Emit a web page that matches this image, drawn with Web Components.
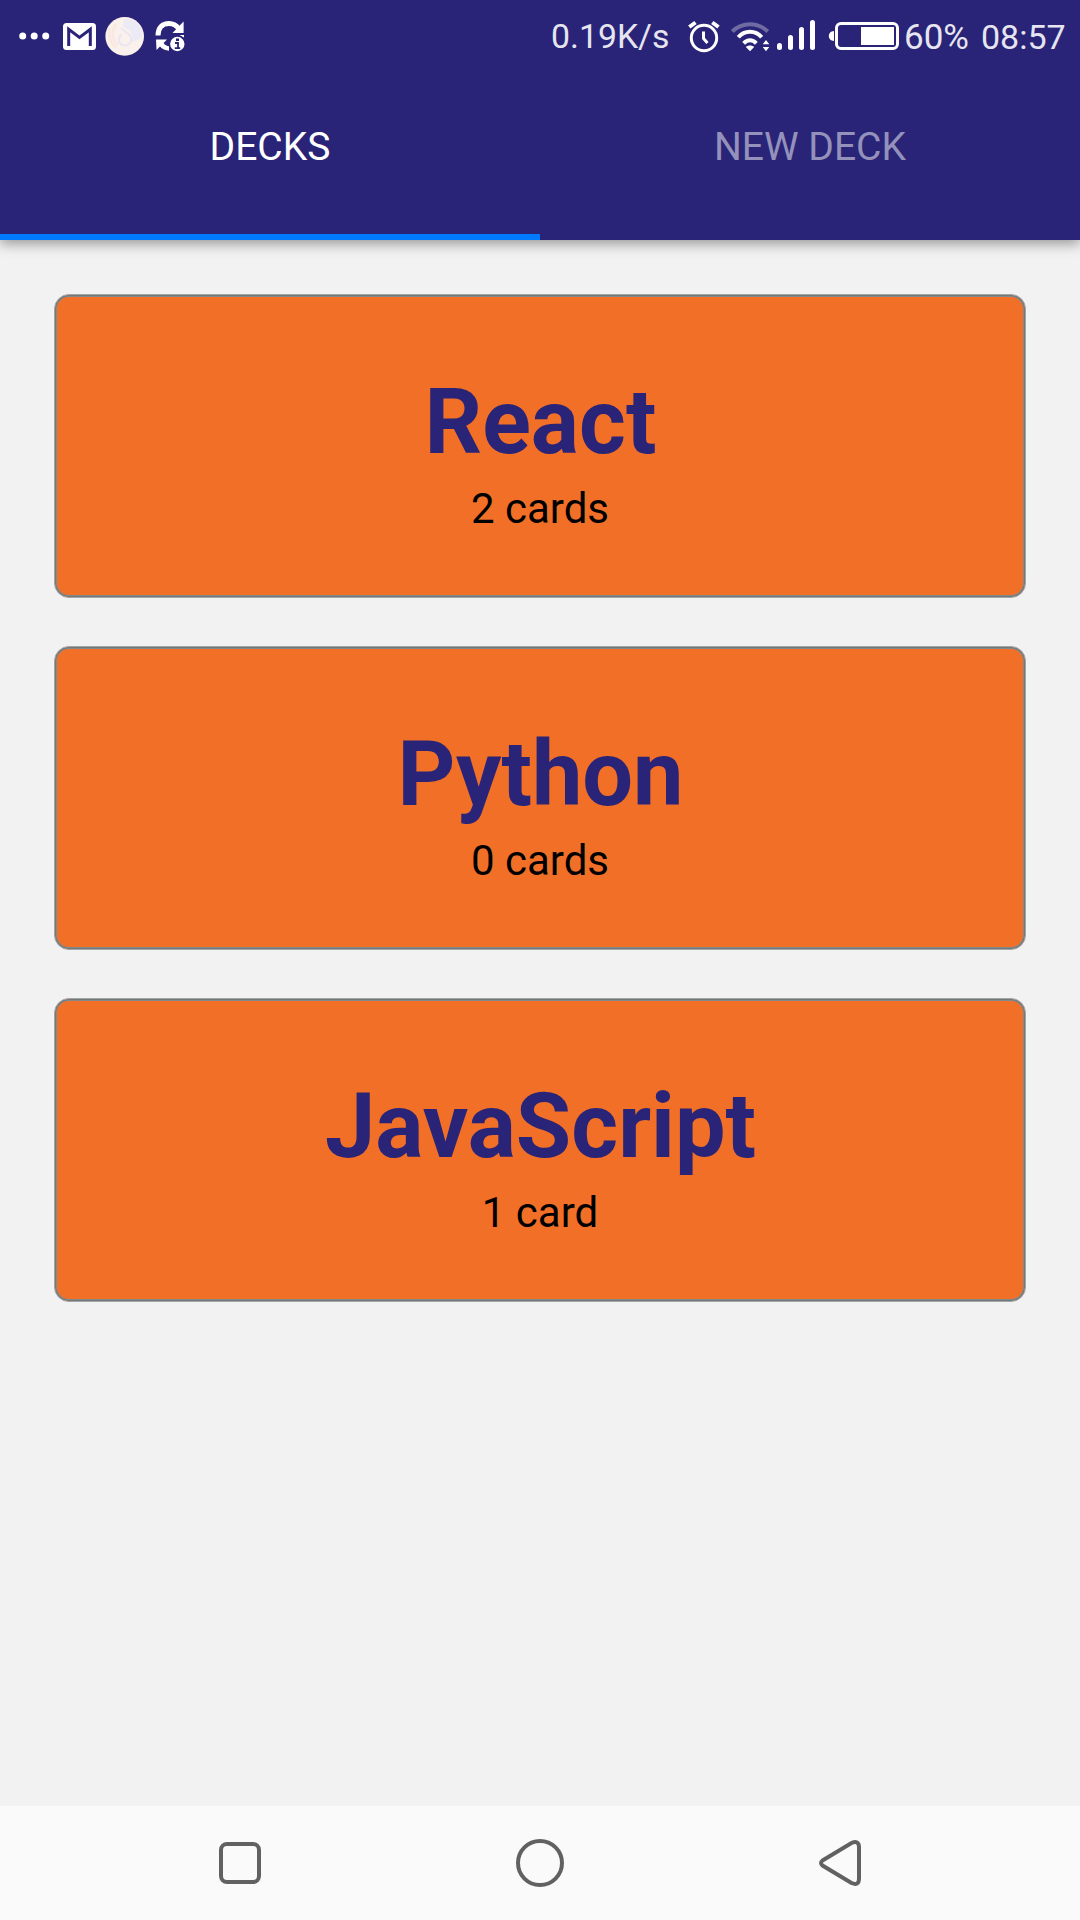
<!DOCTYPE html>
<html lang="en">
<head>
<meta charset="utf-8">
<title>Decks</title>
<style>
html,body{margin:0;padding:0}
body{width:1080px;height:1920px;overflow:hidden;background:#f2f2f2;font-family:Roboto,"Liberation Sans",sans-serif}
</style>
</head>
<body>
<decks-app></decks-app>
<script>
function define(name, html){
  const t=document.createElement('template');
  t.innerHTML=html;
  customElements.define(name,class extends HTMLElement{
    constructor(){super();this.attachShadow({mode:'open'}).appendChild(t.content.cloneNode(true));}
  });
}

define('status-bar',`
<style>
:host{display:flex;justify-content:space-between;height:72px;color:#e6e5f0;font-size:34px;line-height:72px;white-space:nowrap}
div{display:flex}
svg{display:block;flex:none}
span{display:block;flex:none;height:72px;padding-top:1px;box-sizing:border-box}
.net{width:135px;font-size:33.8px}.pct{width:78px;font-size:35px;padding-top:2px;padding-left:1px}.clock{width:99px}
</style>
<div>
<svg width="200" height="72" viewBox="0 0 200 72" fill="#fff">
  <circle cx="22.7" cy="36" r="3.5"/><circle cx="34.2" cy="36" r="3.5"/><circle cx="45.7" cy="36" r="3.5"/>
  <rect x="63" y="23" width="33" height="27" rx="3.5"/>
  <path d="M68.7 46V29.2L79.5 37.4L90.3 29.2V46" fill="none" stroke="#292477" stroke-width="3"/>
  <circle cx="124.7" cy="36.4" r="19.3" fill="#fbf1ec"/>
  <path d="M124 19C136 18 143 27 142 37C139 40 135 41 131 42C135 35 130 29 123 27Z" fill="#ecebf5"/>
  <path d="M121 28C125 33 133 34 131 41C129 47 120 47 119 40C119 36 122 34 122 34" fill="none" stroke="#e9e6f2" stroke-width="2"/>
  <path d="M110 28c-2 7 0 15 6 20M116 24c-5 8-4 16 2 21" fill="none" stroke="#f9e8df" stroke-width="2.500"/>
  <path d="M158 35.500C158 27.500 162.500 23.500 169 23.500C173.500 23.500 176.500 25.500 179 28.700" fill="none" stroke="#fff" stroke-width="5"/>
  <path d="M183.600 21.500V33H172.500Z"/>
  <path d="M156 39.500H167L163.600 43C165 45.200 167 46 169 46.200V50.700C165.500 50.500 162.200 49 160 46.500L156.500 50Z"/>
  <path d="M179.500 35H184V37.500Z"/>
  <circle cx="177.300" cy="44" r="7.200"/>
  <rect x="176" y="38.500" width="3" height="2.500" fill="#292477"/>
  <path d="M175 43h3v5M174.800 48.200h5.400" stroke="#292477" stroke-width="1.800" fill="none"/>
</svg>
</div>
<div>
<span class="net">0.19K/s</span>
<svg width="217" height="72" viewBox="686 0 217 72" fill="none" stroke="#fff">
  <circle cx="704" cy="38" r="12.700" stroke-width="3"/>
  <path d="M703.500 31.500V38.500L707.500 43" stroke-width="3"/>
  <path d="M689.300 27L695.500 22.500M718.500 27L712.300 22.500" stroke-width="4"/>
  <path d="M732.300 31.500C742 21.800 758 21.800 767.700 31.500" stroke="#6f6ba2" stroke-width="4"/>
  <path d="M738.300 37.200C744.500 29.800 755.500 29.800 761.700 37.200M743.700 43.300C747.500 39.300 752.500 39.300 756.300 43.300" stroke-width="4"/>
  <g stroke="none" fill="#fff">
    <path d="M745.800 47C748 45 752 45 754.200 47L750 51.300Z"/>
    <path d="M762.700 44.300L766 40L769.300 44.300ZM762.700 47H769.300L766 51.300Z"/>
    <rect x="777" y="43" width="5" height="7" rx="2.500"/>
    <rect x="788" y="35" width="5" height="15" rx="2.500"/>
    <rect x="799" y="27" width="5" height="23" rx="2.500"/>
    <rect x="810" y="20" width="5" height="30" rx="2.500"/>
    <path d="M834 31V41C827 41 827 31 834 31Z"/>
    <rect x="861" y="27" width="33" height="18"/>
  </g>
  <rect x="836.500" y="23.500" width="61" height="25" rx="4.500" stroke-width="3"/>
</svg>
<span class="pct">60%</span><span class="clock">08:57</span>
</div>`);

define('tab-item',`
<style>
:host{flex:1;display:flex;flex-direction:column;justify-content:space-between;font-size:39px;line-height:46px;text-align:center;text-transform:uppercase;color:#9491bb}
:host([active]){color:#fff}
.label{padding-top:52px}
.bar{height:6px}
:host([active]) .bar{background:#007aff}
</style><div class="label"><slot></slot></div><div class="bar"></div>`);

define('app-header',`
<style>
:host{display:block;flex:none;height:240px;background:#292477;box-shadow:0 4px 12px rgba(0,0,0,.37)}
nav{display:flex;height:168px}
</style><status-bar></status-bar><nav><slot></slot></nav>`);

define('deck-card',`
<style>
:host{display:flex;flex-direction:column;align-items:center;box-sizing:border-box;width:972px;height:304px;padding:75px 0 0;border:1px solid #a3a6a7;border-radius:15px;background:#f26f27;box-shadow:inset 0 0 0 1px #727778,inset 0 0 0 2px #85898a}
.title{font-size:90px;font-weight:700;line-height:106px;padding-left:1px;color:#292477}
.count{font-size:42px;line-height:50px;margin-top:8px;color:#000}
</style><div class="title"><slot name="title"></slot></div><div class="count"><slot></slot></div>`);

define('nav-bar',`
<style>
:host{display:flex;flex:none;justify-content:center;align-items:center;gap:240px;height:114px;background:#fafafa}
svg{display:block;fill:none;stroke:#616161;stroke-width:4}
</style>
<svg width="60" height="60" viewBox="0 0 60 60"><rect x="11" y="11" width="38" height="38" rx="6"/></svg>
<svg width="60" height="60" viewBox="0 0 60 60"><circle cx="30" cy="30" r="22"/></svg>
<svg width="60" height="60" viewBox="0 0 60 60"><path d="M12.500 27.500L41.500 10Q48.800 7 49 14V46Q48.800 53 41.500 50L12.500 32.500Q9.500 30 12.500 27.500Z"/></svg>`);

define('decks-app',`
<style>
:host{display:flex;flex-direction:column;width:1080px;height:1920px;background:#f2f2f2}
main{flex:1;display:flex;flex-direction:column;align-items:center;gap:48px;padding-top:54px}
</style>
<app-header><tab-item active>Decks</tab-item><tab-item>New Deck</tab-item></app-header>
<main>
<deck-card><span slot="title">React</span>2 cards</deck-card>
<deck-card><span slot="title">Python</span>0 cards</deck-card>
<deck-card><span slot="title">JavaScript</span>1 card</deck-card>
</main>
<nav-bar></nav-bar>`);
</script>
</body>
</html>
